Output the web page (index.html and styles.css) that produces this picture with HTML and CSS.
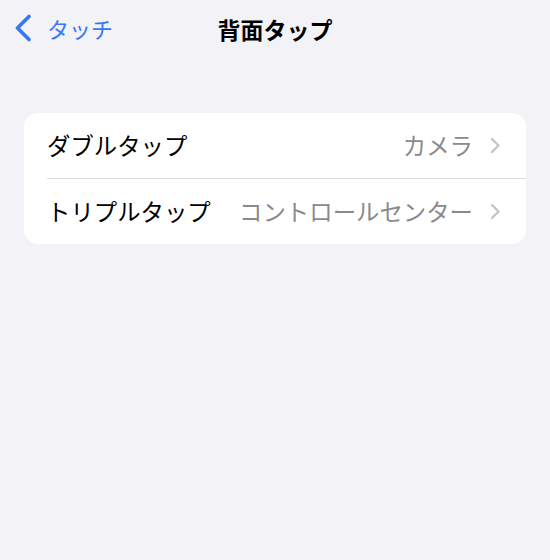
FILE: index.html
```html
<!DOCTYPE html>
<html lang="ja">
<head>
    <meta charset="UTF-8">
    <meta name="viewport" content="width=device-width, initial-scale=1.0">
    <title>背面タップ</title>
    <link rel="stylesheet" href="styles.css">
</head>
<body>

    <header class="navbar">
        <a class="back" href="#">
            <svg class="back-icon" width="20" height="28" viewBox="0 0 20 28">
                <path d="M16 2.5 L4.5 14 L16 25.5" fill="none" stroke="currentColor" stroke-width="3.6" stroke-linecap="round" stroke-linejoin="round"/>
            </svg>
            <span>タッチ</span>
        </a>
        <h1 class="title">背面タップ</h1>
        <div></div>
    </header>

    <main>
        <ul class="group">
            <li class="row">
                <span class="label">ダブルタップ</span>
                <span class="value">カメラ</span>
                <svg class="chevron" width="11" height="17" viewBox="0 0 11 17">
                    <path d="M2 2 L8.5 8.5 L2 15" fill="none" stroke="currentColor" stroke-width="2.4" stroke-linecap="round" stroke-linejoin="round"/>
                </svg>
            </li>
            <li class="row">
                <span class="label">トリプルタップ</span>
                <span class="value">コントロールセンター</span>
                <svg class="chevron" width="11" height="17" viewBox="0 0 11 17">
                    <path d="M2 2 L8.5 8.5 L2 15" fill="none" stroke="currentColor" stroke-width="2.4" stroke-linecap="round" stroke-linejoin="round"/>
                </svg>
            </li>
        </ul>
    </main>

</body>
</html>
```

FILE: styles.css
```css
* {
    margin: 0;
    padding: 0;
    box-sizing: border-box;
}

body {
    background: #f2f2f7;
    color: #000;
    font-family: "Noto Sans CJK JP", "Noto Sans", sans-serif;
    min-height: 100vh;
}

.navbar {
    display: grid;
    grid-template-columns: 1fr auto 1fr;
    align-items: center;
    height: 56px;
    padding: 0 13px;
}

.back {
    display: flex;
    align-items: center;
    gap: 14px;
    color: #3478f6;
    text-decoration: none;
    font-size: 22px;
    line-height: 1;
}

.back-icon {
    display: block;
}

.title {
    font-size: 23px;
    font-weight: bold;
    line-height: 1;
    padding-top: 2px;
}

main {
    padding: 57px 24px 0;
}

.group {
    list-style: none;
    background: #fff;
    border-radius: 14px;
    overflow: hidden;
}

.row {
    display: flex;
    align-items: center;
    height: 65px;
    margin-left: 23px;
    padding-right: 25px;
    font-size: 23.4px;
    line-height: 1;
}

.row + .row {
    height: 66px;
    border-top: 1px solid #dcdce0;
}

.label {
    flex: 1;
}

.value {
    color: #8a8a8e;
    margin-right: 17px;
}

.chevron {
    display: block;
    color: #c4c4c7;
}
```
